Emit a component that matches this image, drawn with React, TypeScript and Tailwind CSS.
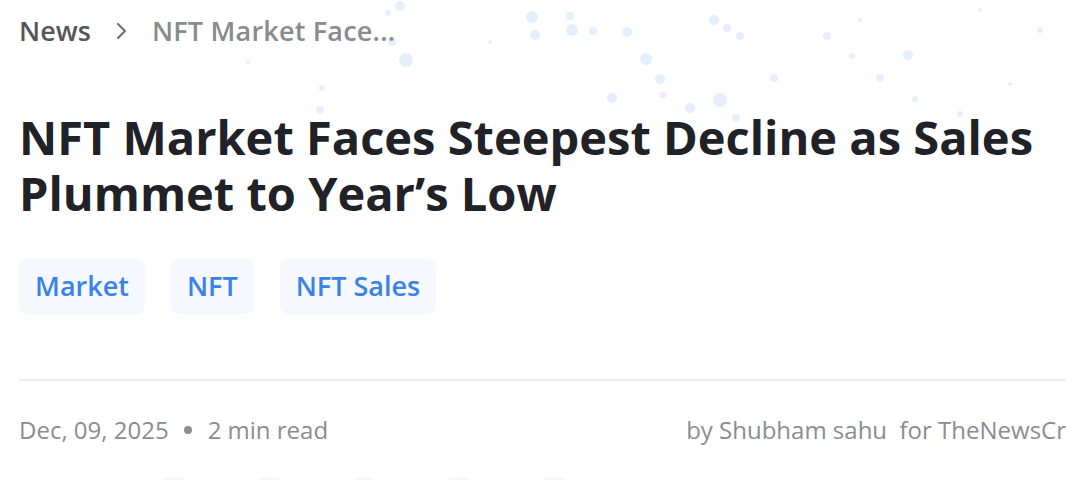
import React from "react";

const dots = [
  [400, 6, 5], [406, 60, 7], [392, 42, 4], [388, 13, 3], [490, 42, 2],
  [570, 16, 4], [532, 17, 6], [535, 35, 5], [572, 30, 6], [593, 31, 4],
  [627, 32, 5], [646, 59, 6], [660, 79, 5], [720, 100, 7], [714, 20, 5],
  [740, 36, 4], [727, 28, 4], [663, 95, 3], [852, 56, 3], [827, 36, 4],
  [860, 20, 2], [908, 55, 5], [915, 99, 3], [880, 78, 4], [774, 78, 4],
  [612, 98, 5], [690, 108, 5], [736, 118, 4], [322, 88, 3], [248, 62, 2],
  [320, 110, 4], [980, 10, 2], [1040, 30, 3], [960, 114, 3], [1010, 84, 2],
];

export default function App() {
  return (
    <div
      className="relative h-[480px] w-[1066px] overflow-hidden bg-white"
      style={{ fontFamily: '"Open Sans", "Noto Sans", sans-serif' }}
    >
      <svg className="pointer-events-none absolute left-0 top-0" width="1066" height="140">
        {dots.map(([x, y, r], i) => (
          <circle key={i} cx={x} cy={y} r={r} fill="#dce8fa" opacity={0.75} />
        ))}
      </svg>

      <div className="relative w-[1200px] pl-[19px] pt-[13px]">
        <nav className="flex items-center text-[27px] font-semibold leading-[36px]">
          <span className="text-[#555658]">News</span>
          <svg className="ml-[25px] mr-[24px]" width="12" height="18" viewBox="0 0 12 18" fill="none">
            <path d="M2 2l7 7-7 7" stroke="#6b6c70" strokeWidth="2" strokeLinecap="round" strokeLinejoin="round" />
          </svg>
          <span className="tracking-[0.2px] text-[#8a8b8e]">NFT Market Face...</span>
        </nav>

        <h1 className="mt-[60px] w-[1040px] text-[47px] font-bold leading-[56px] text-[#202227]">
          NFT Market Faces Steepest Decline as Sales Plummet to Year’s Low
        </h1>

        <div className="mt-[38px] flex gap-[26px]">
          {["Market", "NFT", "NFT Sales"].map((t) => (
            <span
              key={t}
              className="flex h-[55px] items-center rounded-[8px] bg-[#f5f9ff] px-[16px] text-[27px] font-semibold text-[#3b82e8]"
            >
              {t}
            </span>
          ))}
        </div>

        <div className="mt-[65px] h-[2px] w-[1100px] bg-[#ececec]" />

        <div className="mt-[31px] flex w-[1100px] items-center whitespace-nowrap text-[24px] text-[#8b8c8f]">
          <span>Dec, 09, 2025</span>
          <span className="ml-[15px] mr-[16px] h-[8px] w-[8px] rounded-full bg-[#8b8c8f]" />
          <span>2 min read</span>
          <span className="ml-[358px]">by Shubham sahu&nbsp; for TheNewsCrypto</span>
        </div>

        <div className="mt-[29px] flex gap-[43px] pl-[129px]">
          {[0, 1, 2, 3, 4].map((i) => (
            <span key={i} className="h-[52px] w-[52px] rounded-full bg-[#f5f7fd]" />
          ))}
        </div>
      </div>
    </div>
  );
}
